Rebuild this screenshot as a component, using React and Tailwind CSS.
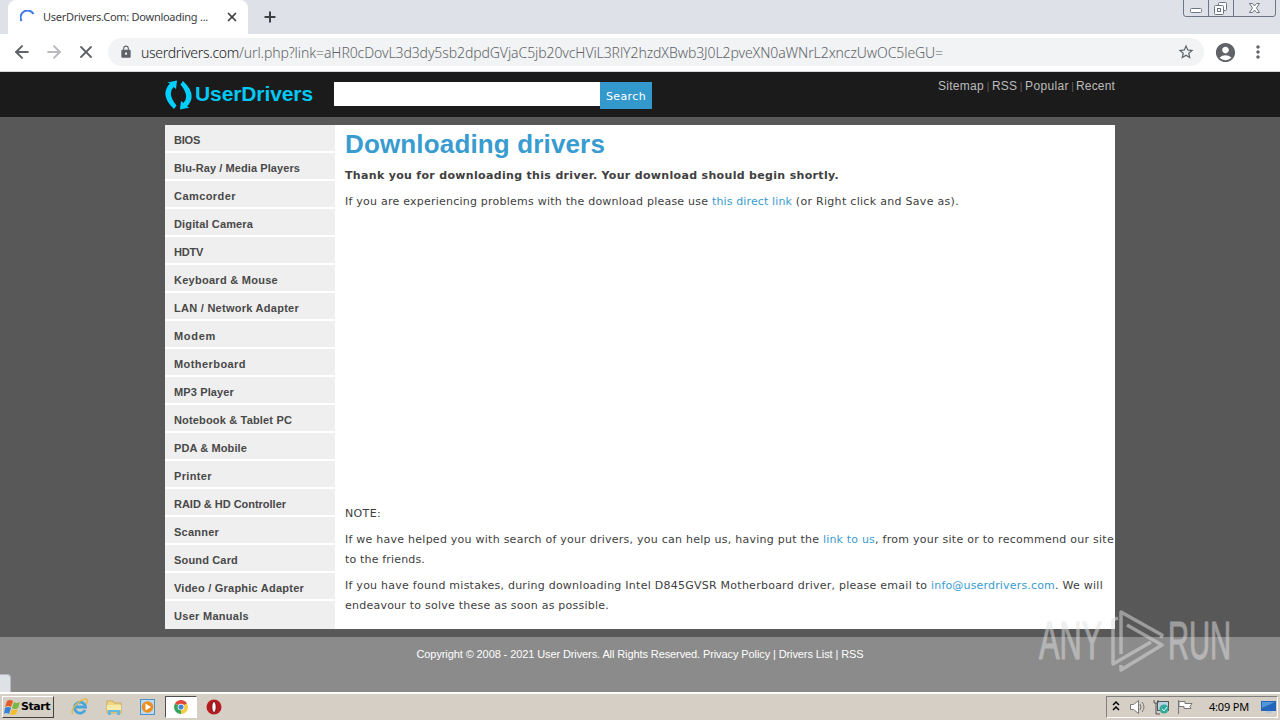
import { ArrowLeft, ArrowRight, X, Plus } from 'lucide-react';
import { MdLock, MdStarBorder, MdAccountCircle, MdMoreVert } from 'react-icons/md';

const categories = [
  { name: 'BIOS', width: 26 },
  { name: 'Blu-Ray / Media Players', width: 126 },
  { name: 'Camcorder', width: 62 },
  { name: 'Digital Camera', width: 79 },
  { name: 'HDTV', width: 29 },
  { name: 'Keyboard & Mouse', width: 104 },
  { name: 'LAN / Network Adapter', width: 125 },
  { name: 'Modem', width: 42 },
  { name: 'Motherboard', width: 72 },
  { name: 'MP3 Player', width: 60 },
  { name: 'Notebook & Tablet PC', width: 118 },
  { name: 'PDA & Mobile', width: 73 },
  { name: 'Printer', width: 38 },
  { name: 'RAID & HD Controller', width: 112 },
  { name: 'Scanner', width: 45 },
  { name: 'Sound Card', width: 64 },
  { name: 'Video / Graphic Adapter', width: 130 },
  { name: 'User Manuals', width: 75 },
];

// One line of text stretched to a known width
function Line({ width, className = '', children }) {
  const fit = (el) => {
    if (!el) return;
    el.style.letterSpacing = '0px';
    const natural = el.getBoundingClientRect().width;
    el.style.letterSpacing = `${(width - natural) / el.textContent.length}px`;
  };
  return <span ref={fit} className={`inline-block whitespace-pre ${className}`}>{children}</span>;
}

function TabStrip() {
  return (
    <div className="relative flex h-[34px] shrink-0 items-start bg-[#dee1e8]">
      <div className="relative ml-2 flex h-[34px] w-[240px] items-center rounded-t-lg bg-white">
        <svg className="ml-3 mt-px h-4 w-4" viewBox="0 0 16 16" fill="none" stroke="#3b78e7" strokeWidth="2">
          <path d="M1.500 11A6.500 6.500 0 0 1 13.500 4" />
        </svg>
        <Line width={165} className="ml-[7px] font-['Noto_Sans'] text-[11px] text-[#3c4043]">UserDrivers.Com: Downloading ...</Line>
        <X className="absolute left-[217px] top-[10px] h-[14px] w-[14px] text-[#3c4043]" strokeWidth={3} />
      </div>
      <Plus className="ml-[14px] mt-[9px] h-4 w-4 text-[#3c4043]" strokeWidth={3} />
      {/* Window buttons */}
      <svg className="absolute right-0 top-0 h-[18px] w-[100px]" viewBox="0 0 100 18" fill="none" stroke="#6f7683">
        <path d="M3.5 0v14q0 2.5 2.5 2.5h87q2.500 0 2.500-2.500V0M28.500 0v16M53.500 0v16" />
        <rect x="10.500" y="8.500" width="11" height="4" rx="1" fill="#fff" />
        <rect x="38.500" y="2.500" width="8" height="8" rx="1" fill="#fff" />
        <rect x="34.500" y="5.500" width="9" height="9" rx="1" fill="#fff" />
        <rect x="37.500" y="8.500" width="3" height="3" />
        <path d="M69.500 3.500h3l2 2.500 2-2.500h3l-3 4.500 3 4.500h-3l-2-2.500-2 2.500h-3l3-4.500z" fill="#fff" />
      </svg>
    </div>
  );
}

function Toolbar() {
  return (
    <div className="flex h-[38px] shrink-0 items-center border-b border-[#d5d7da] bg-white pb-px font-['Noto_Sans']">
      <ArrowLeft className="ml-3 h-5 w-5 text-[#5f6368]" strokeWidth={2.4} />
      <ArrowRight className="ml-3 h-5 w-5 text-[#b8babd]" strokeWidth={2.4} />
      <X className="ml-3 h-5 w-5 text-[#5f6368]" strokeWidth={2.2} />
      <div className="ml-3 flex h-7 w-[1096px] items-center rounded-full bg-[#f1f3f4]">
        <MdLock className="ml-[11px] h-[14px] w-[14px] text-[#5f6368]" />
        <Line width={98} className="ml-2 text-[14px] font-light text-[#202124]">userdrivers.com</Line>
        <Line width={704} className="text-[14px] font-light text-[#5f6368]">
          /url.php?link=aHR0cDovL3d3dy5sb2dpdGVjaC5jb20vcHViL3RlY2hzdXBwb3J0L2pveXN0aWNrL2xnczUwOC5leGU=
        </Line>
        <MdStarBorder className="ml-auto mr-[9px] h-[18px] w-[18px] text-[#5f6368]" />
      </div>
      <MdAccountCircle className="ml-[10px] h-[23px] w-[23px] text-[#5f6368]" />
      <MdMoreVert className="ml-[11px] h-5 w-5 text-[#5f6368]" />
    </div>
  );
}

function SiteHeader() {
  return (
    <div className="flex h-[45px] shrink-0 bg-[#1b1b1b] px-[165px]">
      <svg className="mt-2 h-[30px] w-7" viewBox="0 0 28 30" fill="#00d0ff">
        <path d="M2.500 2.500 12 .5 11 9 8.500 7Q2 14 11.500 25.500L9 29Q-6 15 5 3.500z" />
        <path d="M24.500 27.500 15 29.500 16 21 18.500 23Q25 16 15.500 4.500L18 1Q33 15 22 26.500z" />
      </svg>
      <Line width={118} className="ml-[2px] mt-[7px] text-[21px] font-bold leading-[30px] text-[#00c8f5]">UserDrivers</Line>
      <div className="ml-[21px] mt-[10px] h-6 w-[266px] bg-white" />
      <button className="mt-[10px] h-[27px] w-[52px] bg-[#3399cc] pt-[3px] font-['DejaVu_Sans'] text-[11px] text-white">
        <Line width={40}>Search</Line>
      </button>
      <div className="ml-auto flex h-7 items-center text-[12px] text-[#bcbcbc]">
        <Line width={46}>Sitemap</Line>
        <span className="w-2 text-center text-[10px] text-[#666]">|</span>
        <Line width={25}>RSS</Line>
        <span className="w-2 text-center text-[10px] text-[#666]">|</span>
        <Line width={44}>Popular</Line>
        <span className="w-[7px] text-center text-[10px] text-[#666]">|</span>
        <Line width={39}>Recent</Line>
      </div>
    </div>
  );
}

function Sidebar() {
  return (
    <ul className="w-[170px] shrink-0 text-[11px] font-bold text-[#484848]">
      {categories.map((c) => (
        <li key={c.name} className="flex h-7 items-center border-b-2 border-white bg-[#efefef] pl-[9px] pt-1 last:border-[#efefef]">
          <Line width={c.width}>{c.name}</Line>
        </li>
      ))}
    </ul>
  );
}

function Article() {
  return (
    <div className="ml-[10px] font-['DejaVu_Sans'] text-[11px] leading-5 text-[#404040]">
      <h1 className="h-[41px] font-['Liberation_Sans'] text-[26px] font-bold leading-[38px] text-[#399cd0]">
        <Line width={260}>Downloading drivers</Line>
      </h1>
      <p className="h-[26px] font-bold"><Line width={494}>Thank you for downloading this driver. Your download should begin shortly.</Line></p>
      <p className="flex h-[312px]">
        <Line width={367}>If you are experiencing problems with the download please use </Line>
        <Line width={80} className="text-[#399cd0]">this direct link</Line>
        <Line width={167}> (or Right click and Save as).</Line>
      </p>
      <p className="h-[26px]"><Line width={36}>NOTE:</Line></p>
      <div className="h-[46px]">
        <p className="flex h-5">
          <Line width={478}>If we have helped you with search of your drivers, you can help us, having put the </Line>
          <Line width={52} className="text-[#399cd0]">link to us</Line>
          <Line width={239}>, from your site or to recommend our site</Line>
        </p>
        <p className="h-5"><Line width={80}>to the friends.</Line></p>
      </div>
      <p className="flex h-5">
        <Line width={586}>{'If you have found mistakes, during downloading Intel D845GVSR Motherboard driver, please email to '}</Line>
        <Line width={124} className="text-[#399cd0]">info@userdrivers.com</Line>
        <Line width={48}>. We will</Line>
      </p>
      <p className="h-5"><Line width={264}>endeavour to solve these as soon as possible.</Line></p>
    </div>
  );
}

function Watermark() {
  return (
    <svg className="absolute left-[1030px] top-[590px] h-[90px] w-[240px] overflow-visible opacity-50" viewBox="1030 590 240 90" fill="none" stroke="#e0e0e0" strokeWidth="3.500" strokeLinejoin="round">
      <g fill="#e0e0e0" strokeWidth="1" fontSize="53" fontFamily="Liberation Sans, sans-serif">
        <text transform="translate(1039 659) scale(.58 1)">ANY</text>
        <text transform="translate(1168 659) scale(.55 1)">RUN</text>
      </g>
      <path d="M1121 654V612l41 23-1 3M1118 618l-5 2v44l38-22M1127 625l35 20-41 25v-5" />
    </svg>
  );
}

function Taskbar() {
  return (
    <div className="flex h-[28px] shrink-0 items-center border-t-2 border-white bg-[#d6cfc6]">
      <div className="ml-[2px] flex h-[22px] w-[52px] items-center border border-b-[#404040] border-l-white border-r-[#404040] border-t-white">
        <svg className="ml-px h-4 w-[17px]" viewBox="0 0 17 16">
          <path d="M3 2q3-2 6 0L7 8Q4 6 1 8z" fill="#e45c29" />
          <path d="M10 3q3 2 6 0l-2 6q-3 2-6 0z" fill="#78b843" />
          <path d="M1 9q3-2 6 0l-2 6q-3-2-5 0z" fill="#3581d6" />
          <path d="M8 10q3 2 6 0l-2 5q-3 2-6 0z" fill="#f4bd2b" />
        </svg>
        <Line width={29} className="font-['DejaVu_Sans'] text-[11px] font-bold text-black">Start</Line>
      </div>
      {/* Internet Explorer */}
      <svg className="ml-[17px] h-[18px] w-[18px]" viewBox="0 0 18 18" fill="none">
        <path d="M14 12a5.500 5.500 0 1 1 .5-3H5" stroke="#44a5df" strokeWidth="2.800" />
        <path d="M2 16C-2 12 9 1 15 1q3 1 0 5" stroke="#e4b84a" strokeWidth="1.500" />
      </svg>
      {/* Explorer folder */}
      <svg className="ml-4 h-[18px] w-[18px]" viewBox="0 0 18 18">
        <path d="M2 3h6l1 2h7v10H2z" fill="#efd783" stroke="#cfab54" />
        <path d="M2 7h14v5H2z" fill="#f8eaa9" />
        <path d="M3 17v-5h12v5h-3v-3H6v3z" fill="#65b9df" />
      </svg>
      {/* Media Player */}
      <svg className="ml-4 h-[18px] w-[18px]" viewBox="0 0 18 18">
        <rect x="1.500" y="1.500" width="14" height="15" fill="#b9daf2" stroke="#4f91cb" />
        <circle cx="8.500" cy="9" r="5.800" fill="#ee8e20" />
        <path d="M6.500 5.500v7l5.500-3.500z" fill="#fff" />
      </svg>
      <div className="ml-[8px] flex h-[22px] w-[32px] items-center justify-center border border-b-white border-l-[#505050] border-r-white border-t-[#505050] bg-white">
        <svg className="h-[14px] w-[14px]" viewBox="0 0 16 16">
          <path d="M8 8 1.100 4A8 8 0 0 1 14.900 4z" fill="#df4939" />
          <path d="M8 8 14.900 4A8 8 0 0 1 8 16z" fill="#f7cd3c" />
          <path d="M8 8v8A8 8 0 0 1 1.100 4z" fill="#37a45a" />
          <circle cx="8" cy="8" r="3.800" fill="#fff" />
          <circle cx="8" cy="8" r="2.900" fill="#4285d4" />
        </svg>
      </div>
      {/* Opera */}
      <svg className="ml-[9px] h-4 w-4" viewBox="0 0 16 16">
        <circle cx="8" cy="8" r="7.500" fill="#b7191e" />
        <ellipse cx="8" cy="8" rx="2.200" ry="5.500" fill="#fff" stroke="#720c0e" />
      </svg>
      {/* Notification area */}
      <div className="ml-auto mr-[2px] flex h-[22px] w-[172px] items-center border border-b-white border-l-[#808080] border-r-white border-t-[#808080]">
        <svg className="h-5 w-[94px]" viewBox="0 0 94 20" fill="none">
          <path d="m6 8 3-3 3 3M6 13l3-3 3 3" stroke="#000" strokeWidth="1.500" />
          <path d="M23.500 7.500h3l5-4v13l-5-4h-3z" fill="#fff" stroke="#777" />
          <path d="M33 7q2 3 0 6M35 5q4 5 0 10" stroke="#777" />
          <rect x="50.500" y="4.500" width="11" height="9" fill="#b8d3e4" stroke="#555" />
          <path d="M47 3v3h4V3M49 6v11h4" stroke="#555" />
          <circle cx="57" cy="12" r="4.500" fill="#35a99a" />
          <path d="m55 12 2 2 3-4" stroke="#d8fff8" />
          <path d="M71.500 3v14M72 4.500h6v2h7l-2 3 1 2h-7v-2h-5z" fill="#fff" stroke="#777" />
        </svg>
        <Line width={40} className="ml-[8px] font-['Noto_Sans'] text-[11px] text-black">4:09 PM</Line>
        <svg className="ml-3 h-4 w-4" viewBox="0 0 16 16">
          <path d="M0 2h15v10H0z" fill="#2365b8" />
          <path d="M1 3h13L1 9z" fill="#5295da" />
          <path d="M5 12h6v2H5z" fill="#b4c8da" />
        </svg>
      </div>
    </div>
  );
}

export default function App() {
  return (
    <div className="relative flex h-[720px] w-[1280px] flex-col overflow-hidden bg-[#585858] font-['Liberation_Sans']">
      <TabStrip />
      <Toolbar />
      <SiteHeader />
      <main className="mx-auto mt-2 flex h-[504px] w-[950px] shrink-0 bg-white">
        <Sidebar />
        <Article />
      </main>
      <footer className="mt-2 h-[55px] shrink-0 bg-[#8b8b8b] pt-[9px] text-center text-[11px] leading-4 text-white">
        <Line width={447}>Copyright © 2008 - 2021 User Drivers. All Rights Reserved. Privacy Policy | Drivers List | RSS</Line>
      </footer>
      <Taskbar />
      <div className="absolute left-0 top-[674px] h-[18px] w-[11px] rounded-tr border-r border-t border-[#b5b8bc] bg-[#dee1e6]" />
      <Watermark />
    </div>
  );
}
